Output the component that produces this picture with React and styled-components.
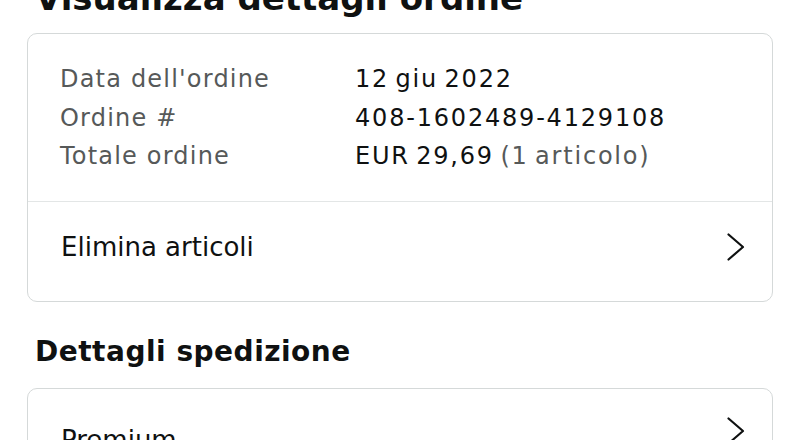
import React from "react";
import styled, { createGlobalStyle } from "styled-components";

const GlobalStyle = createGlobalStyle`
  html, body {
    margin: 0;
    overflow: hidden;
    background: #ffffff;
  }
  body {
    font-family: "DejaVu Sans", "Open Sans", sans-serif;
    color: #0f1111;
  }
`;

const Page = styled.div`
  padding: 0 27px;
`;

const Title = styled.h1`
  margin: -22px 0 15px 8px;
  font-size: 34px;
  line-height: 40px;
  font-weight: 700;
  white-space: nowrap;
`;

const SectionTitle = styled.h2`
  margin: 33px 0 19px 8px;
  font-size: 28px;
  line-height: 34px;
  font-weight: 700;
  letter-spacing: 0.5px;
`;

const Card = styled.div`
  border: 1px solid #d5d9d9;
  border-radius: 10px;
  background: #ffffff;
  overflow: hidden;
`;

const Summary = styled.div`
  display: grid;
  grid-template-columns: 295px 1fr;
  padding: 26px 32px 25px;
  font-size: 24px;
  line-height: 38.5px;
`;

const Label = styled.div`
  color: #565959;
  letter-spacing: 1.2px;
`;

const Value = styled.div`
  color: #0f1111;
  letter-spacing: 1.8px;
  word-spacing: -3px;
`;

const Muted = styled.span`
  color: #565959;
`;

const LinkRow = styled.div`
  display: flex;
  justify-content: space-between;
  align-items: ${(p) => (p.$top ? "flex-start" : "center")};
  padding: ${(p) => (p.$top ? "28px 27px 40px 33px" : "30px 27px 39px 33px")};
  border-top: ${(p) => (p.$divider ? "1px solid #e3e6e6" : "none")};
  font-size: 26px;
  line-height: 30px;
`;

const RowText = styled.span`
  margin-top: ${(p) => (p.$top ? "8px" : "0")};
`;

const Chevron = () => (
  <svg width="18" height="28" viewBox="0 0 18 28" fill="none">
    <polyline
      points="1.5,1.5 16,14 1.5,26.5"
      stroke="#0f1111"
      strokeWidth="2.2"
      strokeLinecap="round"
      strokeLinejoin="round"
    />
  </svg>
);

const orderInfo = [
  { label: "Data dell'ordine", value: "12 giu 2022" },
  { label: "Ordine #", value: "408-1602489-4129108" },
  { label: "Totale ordine", value: "EUR 29,69", extra: " (1 articolo)" },
];

const App = () => {
  return (
    <Page>
      <GlobalStyle />
      <Title>Visualizza dettagli ordine</Title>
      <Card>
        <Summary>
          {orderInfo.map((row) => (
            <React.Fragment key={row.label}>
              <Label>{row.label}</Label>
              <Value>
                {row.value}
                {row.extra && <Muted>{row.extra}</Muted>}
              </Value>
            </React.Fragment>
          ))}
        </Summary>
        <LinkRow $divider>
          <RowText>Elimina articoli</RowText>
          <Chevron />
        </LinkRow>
      </Card>
      <SectionTitle>Dettagli spedizione</SectionTitle>
      <Card>
        <LinkRow $top>
          <RowText $top>Premium</RowText>
          <Chevron />
        </LinkRow>
      </Card>
    </Page>
  );
};

export default App;
